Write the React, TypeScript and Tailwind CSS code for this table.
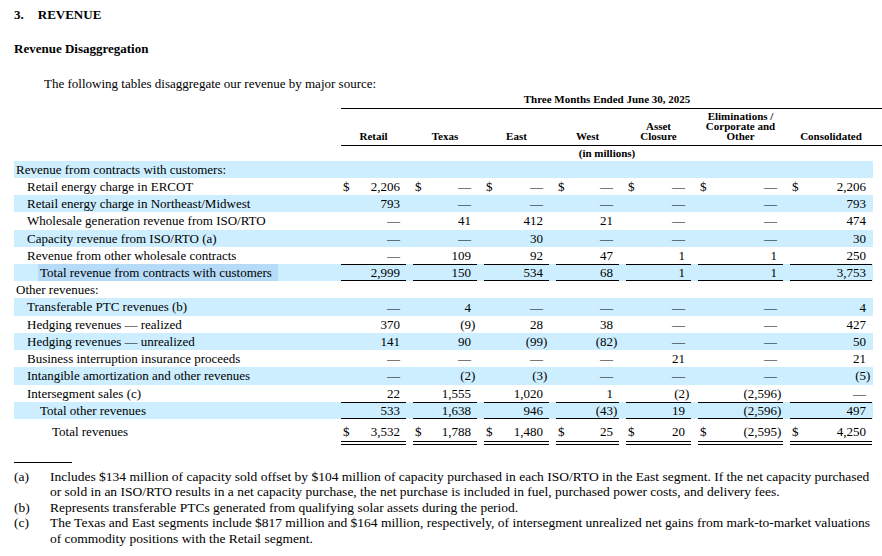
import React from "react";

type Row = {
  label: string;
  indent: number;
  blue?: boolean;
  cells?: string[];
  dollar?: boolean;
  total?: boolean;
  grand?: boolean;
  mark?: boolean;
};

const D = "—";

const rows: Row[] = [
  { label: "Revenue from contracts with customers:", indent: 0, blue: true },
  { label: "Retail energy charge in ERCOT", indent: 1, dollar: true, cells: ["2,206", D, D, D, D, D, "2,206"] },
  { label: "Retail energy charge in Northeast/Midwest", indent: 1, blue: true, cells: ["793", D, D, D, D, D, "793"] },
  { label: "Wholesale generation revenue from ISO/RTO", indent: 1, cells: [D, "41", "412", "21", D, D, "474"] },
  { label: "Capacity revenue from ISO/RTO (a)", indent: 1, blue: true, cells: [D, D, "30", D, D, D, "30"] },
  { label: "Revenue from other wholesale contracts", indent: 1, cells: [D, "109", "92", "47", "1", "1", "250"] },
  { label: "Total revenue from contracts with customers", indent: 2, blue: true, total: true, mark: true, cells: ["2,999", "150", "534", "68", "1", "1", "3,753"] },
  { label: "Other revenues:", indent: 0 },
  { label: "Transferable PTC revenues (b)", indent: 1, blue: true, cells: [D, "4", D, D, D, D, "4"] },
  { label: "Hedging revenues — realized", indent: 1, cells: ["370", "(9)", "28", "38", D, D, "427"] },
  { label: "Hedging revenues — unrealized", indent: 1, blue: true, cells: ["141", "90", "(99)", "(82)", D, D, "50"] },
  { label: "Business interruption insurance proceeds", indent: 1, cells: [D, D, D, D, "21", D, "21"] },
  { label: "Intangible amortization and other revenues", indent: 1, blue: true, cells: [D, "(2)", "(3)", D, D, D, "(5)"] },
  { label: "Intersegment sales (c)", indent: 1, cells: ["22", "1,555", "1,020", "1", "(2)", "(2,596)", D] },
  { label: "Total other revenues", indent: 2, blue: true, total: true, cells: ["533", "1,638", "946", "(43)", "19", "(2,596)", "497"] },
];

const grandRow: Row = {
  label: "Total revenues",
  indent: 3,
  dollar: true,
  grand: true,
  cells: ["3,532", "1,788", "1,480", "25", "20", "(2,595)", "4,250"],
};

const colClass = [
  "w-[72px] pr-[7px]",
  "w-[71px] pr-[7px]",
  "w-[72px] pr-[7px]",
  "w-[70px] pr-[7px]",
  "w-[72px] pr-[7px]",
  "w-[92px] pr-[7px]",
  "w-[82px]",
];

const indentClass = ["pl-[2px]", "pl-[13px]", "pl-[26px]", "pl-[38px]"];

function Value({ v, dollar, line }: { v: string; dollar?: boolean; line: string }) {
  const neg = v.startsWith("(");
  const body = neg ? v.slice(0, -1) : v;
  return (
    <div className={`flex h-full items-center justify-between ${line}`}>
      <span className="pl-[2px]">{dollar ? "$" : ""}</span>
      <span className="flex">
        <span>{body}</span>
        <span className="w-[6px]">{neg ? ")" : ""}</span>
      </span>
    </div>
  );
}

function TableRow({ row }: { row: Row }) {
  const line = row.total ? "border-y border-black" : "";
  return (
    <div className={`flex h-[17.23px] leading-[17px] ${row.blue ? "bg-[#cceeff]" : ""}`}>
      <div className={`w-[327px] whitespace-nowrap ${indentClass[row.indent]}`}>
        <span className={row.mark ? "-ml-[2px] inline-block h-full bg-[#b5dbf8] px-[2px] pr-[6px]" : ""}>{row.label}</span>
      </div>
      {row.cells &&
        row.cells.map((c, i) => (
          <div key={i} className={colClass[i]}>
            <Value v={c} dollar={row.dollar} line={line} />
          </div>
        ))}
    </div>
  );
}

const headers: React.ReactNode[] = [
  "Retail",
  "Texas",
  "East",
  "West",
  <>Asset<br />Closure</>,
  <>Eliminations /<br />Corporate and<br />Other</>,
  "Consolidated",
];

export default function App() {
  return (
    <div className="h-[556px] w-[882px] overflow-hidden bg-white pl-[14px] font-['Liberation_Serif',serif] text-[13px] text-black">
      <div className="pt-[6px] font-bold leading-[17px]">
        3.<span className="ml-[14px]">REVENUE</span>
      </div>
      <div className="mt-[17px] font-bold leading-[17px]">Revenue Disaggregation</div>
      <p className="mt-[18px] pl-[30px] leading-[17px]">The following tables disaggregate our revenue by major source:</p>

      {/* column headers */}
      <div className="mt-[1px] flex">
        <div className="w-[327px]" />
        <div className="w-[541px] text-[11px] font-bold">
          <div className="border-b border-black pb-[2px] pr-[9px] text-center leading-[13px]">
            Three Months Ended June 30, 2025
          </div>
          <div className="flex h-[37px] items-end border-b border-black pb-[4px] leading-[10px]">
            {headers.map((h, i) => (
              <div key={i} className={colClass[i]}>
                <div className="text-center">{h}</div>
              </div>
            ))}
          </div>
          <div className="h-[14.7px] pr-[9px] text-center leading-[14px]">(in millions)</div>
        </div>
      </div>

      <div className="w-[859px]">
        {rows.map((r, i) => (
          <TableRow key={i} row={r} />
        ))}
        <div className="flex h-[26px] leading-[17px]">
          <div className={`w-[327px] pt-[4px] ${indentClass[grandRow.indent]}`}>{grandRow.label}</div>
          {grandRow.cells!.map((c, i) => (
            <div key={i} className={colClass[i]}>
              <div className="h-full border-b-4 border-double border-black pt-[4px]">
                <div className="h-[17px]">
                  <Value v={c} dollar line="" />
                </div>
              </div>
            </div>
          ))}
        </div>
      </div>

      {/* footnotes */}
      <div className="mt-[17px] w-[58px] border-t border-black" />
      <div className="mt-[6px] whitespace-nowrap text-[13.5px] leading-[15.5px]">
        <div className="flex">
          <div className="w-[36px]">(a)</div>
          <div>
            Includes $134 million of capacity sold offset by $104 million of capacity purchased in each ISO/RTO in the East segment. If the net capacity purchased
            <br />
            or sold in an ISO/RTO results in a net capacity purchase, the net purchase is included in fuel, purchased power costs, and delivery fees.
          </div>
        </div>
        <div className="flex">
          <div className="w-[36px]">(b)</div>
          <div>Represents transferable PTCs generated from qualifying solar assets during the period.</div>
        </div>
        <div className="flex">
          <div className="w-[36px]">(c)</div>
          <div>
            The Texas and East segments include $817 million and $164 million, respectively, of intersegment unrealized net gains from mark-to-market valuations
            <br />
            of commodity positions with the Retail segment.
          </div>
        </div>
      </div>
    </div>
  );
}
